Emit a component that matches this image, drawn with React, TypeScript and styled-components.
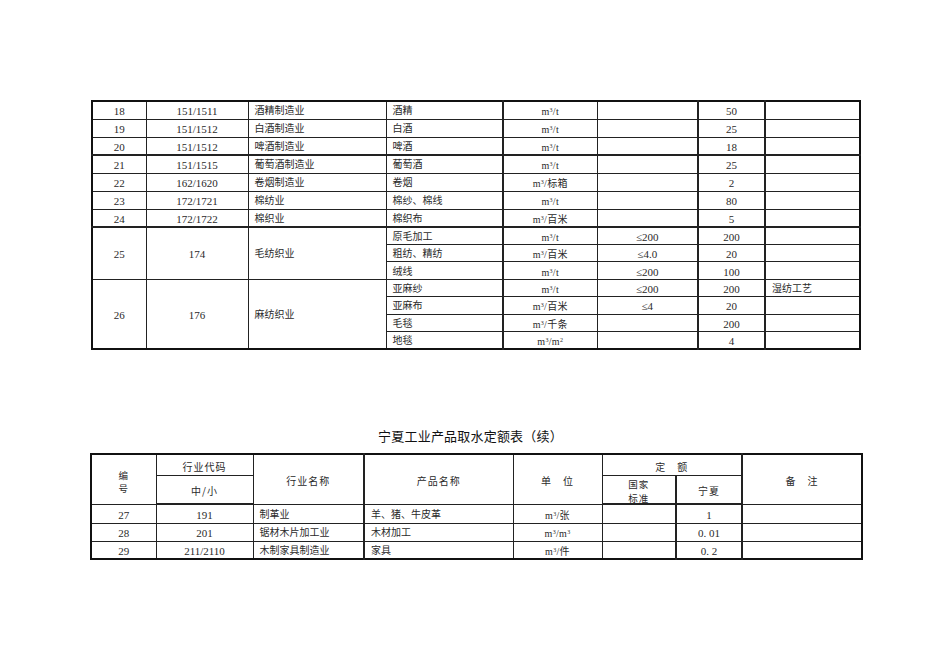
import React from 'react';
import styled, { createGlobalStyle } from 'styled-components';

const GlobalStyle = createGlobalStyle`
  html, body {
    margin: 0;
    padding: 0;
    background: #fff;
  }
`;

const Page = styled.div`
  width: 950px;
  height: 672px;
  box-sizing: border-box;
  padding: 100px 0 0 90px;
  font-family: 'Liberation Serif', 'Noto Sans CJK SC', serif;
  color: #2a2a2a;
`;

const Table = styled.table<{ $w: number; $ml?: number }>`
  border-collapse: collapse;
  table-layout: fixed;
  width: ${({ $w }) => $w}px;
  margin-left: ${({ $ml }) => $ml ?? 0}px;
  border: 2px solid #111;
`;

const Row = styled.tr<{ $h: number; $thick?: boolean }>`
  height: ${({ $h }) => $h}px;
  td {
    ${({ $thick }) => ($thick ? 'border-bottom: 2px solid #222;' : '')}
  }
`;

const Cell = styled.td<{ $align?: string; $num?: boolean; $thickR?: boolean }>`
  border: 1px solid #222;
  ${({ $thickR }) => ($thickR ? 'border-right: 2px solid #222;' : '')}
  padding: 2px 0 0 ${({ $align }) => ($align === 'left' ? '6px' : '0')};
  text-align: ${({ $align }) => $align ?? 'center'};
  vertical-align: middle;
  font-size: ${({ $num }) => ($num ? '11px' : '10px')};
  line-height: 12px;
  white-space: nowrap;
  overflow: visible;
`;

const HeadCell = styled(Cell)<{ $stack?: boolean }>`
  font-family: 'Noto Sans CJK SC', sans-serif;
  font-size: 10px;
  letter-spacing: 1px;
  padding-top: ${({ $stack }) => ($stack ? '0' : '3px')};
`;

const Stack = styled.div<{ $shift: number }>`
  display: flex;
  flex-direction: column;
  align-items: center;
  font-size: 9.5px;
  line-height: 13.5px;
  transform: translateY(${({ $shift }) => $shift}px);
`;

const Unit = styled.span`
  font-size: 10px;
  letter-spacing: 0.3px;
  sup {
    font-size: 6px;
    vertical-align: 3px;
  }
  em {
    font-style: normal;
    font-size: 10px;
    font-family: 'Noto Sans CJK SC', sans-serif;
  }
`;

const Title = styled.div`
  width: 771px;
  box-sizing: border-box;
  padding-right: 10px;
  margin: 77px 0 8px 0;
  text-align: center;
  font-family: 'Noto Sans CJK SC', sans-serif;
  font-size: 13px;
  line-height: 18px;
  color: #111;
  letter-spacing: 0.2px;
`;

type UnitSpec = { per: string; sup?: string };

const U = ({ per, sup }: UnitSpec) => {
  const cjk = /[\u4e00-\u9fff]/.test(per);
  return (
    <Unit>
      m<sup>3</sup>/{cjk ? <em>{per}</em> : per}
      {sup && <sup>{sup}</sup>}
    </Unit>
  );
};

type Item = { p: string; u: UnitSpec; std?: string; nx: string; note?: string };
type Group = { id: string; code: string; ind: string; items: Item[]; thick?: boolean };

const upper: Group[] = [
  { id: '18', code: '151/1511', ind: '酒精制造业', items: [{ p: '酒精', u: { per: 't' }, nx: '50' }] },
  { id: '19', code: '151/1512', ind: '白酒制造业', items: [{ p: '白酒', u: { per: 't' }, nx: '25' }] },
  { id: '20', code: '151/1512', ind: '啤酒制造业', items: [{ p: '啤酒', u: { per: 't' }, nx: '18' }], thick: true },
  { id: '21', code: '151/1515', ind: '葡萄酒制造业', items: [{ p: '葡萄酒', u: { per: 't' }, nx: '25' }] },
  { id: '22', code: '162/1620', ind: '卷烟制造业', items: [{ p: '卷烟', u: { per: '标箱' }, nx: '2' }] },
  { id: '23', code: '172/1721', ind: '棉纺业', items: [{ p: '棉纱、棉线', u: { per: 't' }, nx: '80' }] },
  { id: '24', code: '172/1722', ind: '棉织业', items: [{ p: '棉织布', u: { per: '百米' }, nx: '5' }], thick: true },
  {
    id: '25',
    code: '174',
    ind: '毛纺织业',
    items: [
      { p: '原毛加工', u: { per: 't' }, std: '≤200', nx: '200' },
      { p: '粗纺、精纺', u: { per: '百米' }, std: '≤4.0', nx: '20' },
      { p: '绒线', u: { per: 't' }, std: '≤200', nx: '100' },
    ],
  },
  {
    id: '26',
    code: '176',
    ind: '麻纺织业',
    items: [
      { p: '亚麻纱', u: { per: 't' }, std: '≤200', nx: '200', note: '湿纺工艺' },
      { p: '亚麻布', u: { per: '百米' }, std: '≤4', nx: '20' },
      { p: '毛毯', u: { per: '千条' }, nx: '200' },
      { p: '地毯', u: { per: 'm', sup: '2' }, nx: '4' },
    ],
  },
];

const lower: Group[] = [
  { id: '27', code: '191', ind: '制革业', items: [{ p: '羊、猪、牛皮革', u: { per: '张' }, nx: '1' }] },
  { id: '28', code: '201', ind: '锯材木片加工业', items: [{ p: '木材加工', u: { per: 'm', sup: '3' }, nx: '0. 01' }] },
  { id: '29', code: '211/2110', ind: '木制家具制造业', items: [{ p: '家具', u: { per: '件' }, nx: '0. 2' }] },
];

const upperCols = [54, 102, 138, 117, 94, 101, 67, 95];
const lowerCols = [65, 97, 111, 149, 89, 74, 66, 120];

// which column lines are drawn heavier
type Layout = { ind: boolean; prod: boolean; std: boolean; nx: boolean };
const upperLines: Layout = { ind: false, prod: true, std: true, nx: true };
const lowerLines: Layout = { ind: true, prod: false, std: true, nx: true };

function GroupRows({ g, h, lines }: { g: Group; h: number; lines: Layout }) {
  const span = g.items.length;
  const rh = span > 1 ? 17.4 : h;
  return (
    <>
      {g.items.map((it, i) => (
        <Row key={i} $h={rh} $thick={g.thick}>
          {i === 0 && (
            <>
              <Cell rowSpan={span} $num>
                {g.id}
              </Cell>
              <Cell rowSpan={span} $num>
                {g.code}
              </Cell>
              <Cell rowSpan={span} $align="left" $thickR={lines.ind}>
                {g.ind}
              </Cell>
            </>
          )}
          <Cell $align="left" $thickR={lines.prod}>
            {it.p}
          </Cell>
          <Cell>
            <U {...it.u} />
          </Cell>
          <Cell $num $thickR={lines.std}>
            {it.std}
          </Cell>
          <Cell $num $thickR={lines.nx}>
            {it.nx}
          </Cell>
          <Cell $align="left">{it.note}</Cell>
        </Row>
      ))}
    </>
  );
}

function Cols({ widths }: { widths: number[] }) {
  return (
    <colgroup>
      {widths.map((w, i) => (
        <col key={i} style={{ width: w }} />
      ))}
    </colgroup>
  );
}

export default function App() {
  return (
    <Page>
      <GlobalStyle />
      <Table $w={768} $ml={1}>
        <Cols widths={upperCols} />
        <tbody>
          {upper.map((g) => (
            <GroupRows key={g.id} g={g} h={18} lines={upperLines} />
          ))}
        </tbody>
      </Table>

      <Title>宁夏工业产品取水定额表（续）</Title>

      <Table $w={771}>
        <Cols widths={lowerCols} />
        <tbody>
          <Row $h={22}>
            <HeadCell rowSpan={2} $stack>
              <Stack $shift={3}>
                <span>编</span>
                <span>号</span>
              </Stack>
            </HeadCell>
            <HeadCell>行业代码</HeadCell>
            <HeadCell rowSpan={2} $thickR>
              行业名称
            </HeadCell>
            <HeadCell rowSpan={2}>产品名称</HeadCell>
            <HeadCell rowSpan={2}>单　位</HeadCell>
            <HeadCell colSpan={2} $thickR>
              定　额
            </HeadCell>
            <HeadCell rowSpan={2}>备　注</HeadCell>
          </Row>
          <Row $h={28} $thick>
            <HeadCell>中/小</HeadCell>
            <HeadCell $thickR $stack>
              <Stack $shift={2}>
                <span>国家</span>
                <span>标准</span>
              </Stack>
            </HeadCell>
            <HeadCell $thickR>宁夏</HeadCell>
          </Row>
          {lower.map((g, i) => (
            <GroupRows key={g.id} g={g} h={i === 0 ? 19 : 18} lines={lowerLines} />
          ))}
        </tbody>
      </Table>
    </Page>
  );
}
